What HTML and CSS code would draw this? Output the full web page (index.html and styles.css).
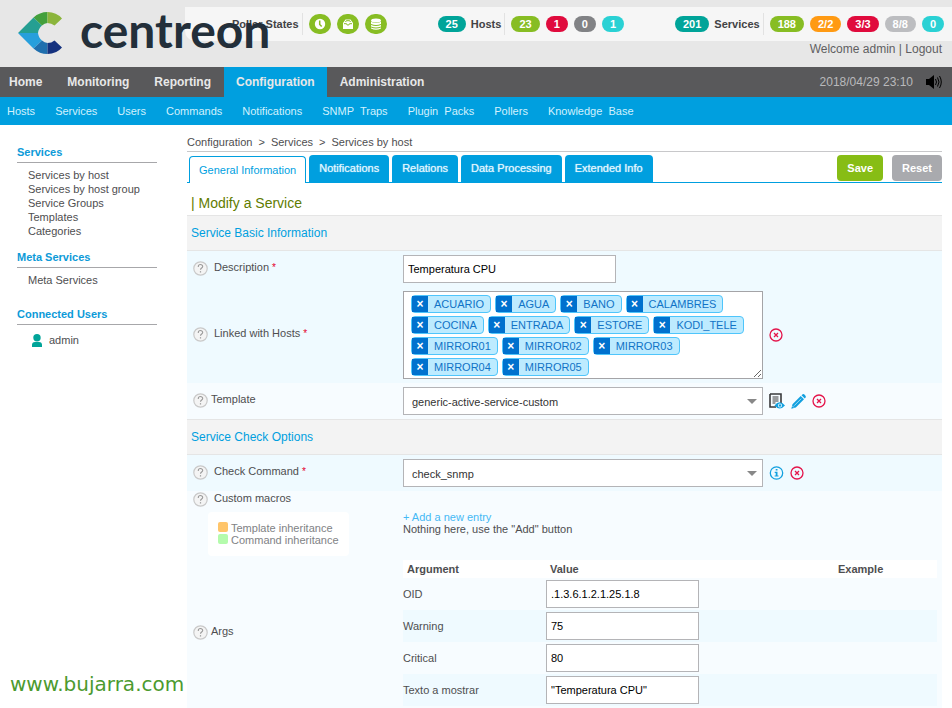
FILE: index.html
```html
<!DOCTYPE html>
<html lang="en">
<head>
    <meta charset="UTF-8">
    <meta name="viewport" content="width=device-width, initial-scale=1.0">
    <title>Centreon - Modify a Service</title>
    <link rel="stylesheet" href="styles.css">
</head>
<body>
    <!-- shared icons -->
    <svg class="sprite" aria-hidden="true">
        <symbol id="icon-help" viewBox="0 0 15 15">
            <circle cx="7.5" cy="7.5" r="6.7" fill="#f4f4f4" stroke="#c9c9c9" stroke-width="1.2"/>
            <path d="M5.3 6V5.5a2.2 2 0 0 1 4.4 0c0 1.6-2.2 1.5-2.2 3.3" fill="none" stroke="#999" stroke-width="1.1"/>
            <rect x="6.9" y="10.2" width="1.2" height="1.3" fill="#999"/>
        </symbol>
        <symbol id="icon-delete" viewBox="0 0 14 14">
            <circle cx="7" cy="7" r="6" fill="none" stroke="#e4154b" stroke-width="1.3"/>
            <path d="M5 5l4 4M9 5L5 9" stroke="#e4154b" stroke-width="1.3"/>
        </symbol>
    </svg>

    <header class="header">
        <a href="#" class="logo">
            <svg class="logo-mark" viewBox="0 0 44 42" aria-hidden="true">
                <path d="M0 21L15.500 5.500L24 13.500Q20.500 16.500 20 21z" fill="#259f92"/>
                <path d="M15.500 5.500Q21.500 0 29.500 0V11Q26.500 11.200 24 13.500z" fill="#43a03c"/>
                <path d="M29.500 0Q38.500 0 44 6.500L36.500 13.500Q33.500 11 29.500 11z" fill="#8bb53c"/>
                <path d="M0 21L15.500 36.500L24 28.500Q20.500 25.500 20 21z" fill="#279fdc"/>
                <path d="M15.500 36.500Q21.500 42 29.500 42V31Q26.500 30.800 24 28.500z" fill="#1f6fae"/>
                <path d="M29.500 42Q38.500 42 44 35.500L36.500 28.500Q33.500 31 29.500 31z" fill="#15327f"/>
            </svg>
            <span class="logo-text">centreon</span>
        </a>
        <div class="status-bar">
            <div class="status-group pollers">
                <span class="status-label">Poller States</span>
                <a href="#" class="poller" aria-label="Poller status">
                    <svg viewBox="0 0 22 20"><circle cx="11" cy="10" r="5.200" fill="#fff"/><path d="M10.700 6.500v4l2 2" fill="none" stroke="#87bd23" stroke-width="1.500"/></svg>
                </a>
                <a href="#" class="poller" aria-label="Poller latency">
                    <svg viewBox="0 0 22 20"><path d="M6 10.500V9l2.500-3.500h5L16 9v1.500V15H6z" fill="#fff"/><path d="M7 9.700h2.500l.7 1.300h1.600l.7-1.300H15M8.500 8l.8-1.300h3.400l.8 1.300" fill="none" stroke="#87bd23"/></svg>
                </a>
                <a href="#" class="poller" aria-label="Poller database">
                    <svg viewBox="0 0 22 20"><ellipse cx="11" cy="6.500" rx="5" ry="2" fill="#fff"/><path d="M6 7.700q5 2.600 10 0v2.200q-5 2.200-10 0zM6 10.900q5 2.200 10 0v1.600q-5 2.200-10 0zM6 13.500q5 2.200 10 0v1q-5 2.600-10 0z" fill="#fff"/></svg>
                </a>
            </div>
            <div class="status-group">
                <a href="#" class="badge total">25</a>
                <span class="status-label">Hosts</span>
                <a href="#" class="badge ok">23</a>
                <a href="#" class="badge critical">1</a>
                <a href="#" class="badge unreachable">0</a>
                <a href="#" class="badge pending">1</a>
            </div>
            <div class="status-group">
                <a href="#" class="badge total">201</a>
                <span class="status-label">Services</span>
                <a href="#" class="badge ok">188</a>
                <a href="#" class="badge warning">2/2</a>
                <a href="#" class="badge critical">3/3</a>
                <a href="#" class="badge unknown">8/8</a>
                <a href="#" class="badge pending">0</a>
            </div>
        </div>
        <div class="user-bar">Welcome <a href="#">admin</a> | <a href="#">Logout</a></div>
    </header>

    <nav class="nav">
        <a href="#">Home</a>
        <a href="#">Monitoring</a>
        <a href="#">Reporting</a>
        <a href="#" class="active">Configuration</a>
        <a href="#">Administration</a>
        <span class="clock">2018/04/29 23:10</span>
        <button type="button" class="icon-button sound" aria-label="Sound">
            <svg width="16" height="14" viewBox="0 0 16 14"><path d="M0 4h3l5-4v14L3 10H0z" fill="#000"/><path d="M9.500 4q2 3 0 6M11.500 2.500q3 4.500 0 9M13.500 1q3.600 6 0 12" fill="none" stroke="#000" stroke-width="1"/></svg>
        </button>
    </nav>
    <nav class="subnav">
        <a href="#">Hosts</a>
        <a href="#">Services</a>
        <a href="#">Users</a>
        <a href="#">Commands</a>
        <a href="#">Notifications</a>
        <a href="#">SNMP&nbsp; Traps</a>
        <a href="#">Plugin&nbsp; Packs</a>
        <a href="#">Pollers</a>
        <a href="#">Knowledge&nbsp; Base</a>
    </nav>

    <div class="page">
        <aside class="sidebar">
            <h3>Services</h3>
            <ul>
                <li><a href="#">Services by host</a></li>
                <li><a href="#">Services by host group</a></li>
                <li><a href="#">Service Groups</a></li>
                <li><a href="#">Templates</a></li>
                <li><a href="#">Categories</a></li>
            </ul>
            <h3>Meta Services</h3>
            <ul class="meta">
                <li><a href="#">Meta Services</a></li>
            </ul>
            <h3>Connected Users</h3>
            <div class="connected">
                <svg width="10" height="13" viewBox="0 0 10 13"><circle cx="5" cy="3.700" r="3.700" fill="#00a499"/><path d="M0 13v-2q0-3 3-3h4q3 0 3 3v2z" fill="#00a499"/></svg>
                <span>admin</span>
            </div>
        </aside>

        <main class="main">
            <div class="breadcrumb">
                <a href="#">Configuration</a><span>&gt;</span><a href="#">Services</a><span>&gt;</span><a href="#">Services by host</a>
            </div>

            <form class="service-form">
                <div class="toolbar">
                    <a href="#" class="tab active">General Information</a>
                    <a href="#" class="tab">Notifications</a>
                    <a href="#" class="tab">Relations</a>
                    <a href="#" class="tab">Data Processing</a>
                    <a href="#" class="tab">Extended Info</a>
                    <div class="actions">
                        <button type="submit" class="btn save">Save</button>
                        <button type="reset" class="btn reset">Reset</button>
                    </div>
                </div>

                <h1>| Modify a Service</h1>

                <h2>Service Basic Information</h2>
                <div class="row alt">
                    <div class="name wide">
                        <svg class="help"><use href="#icon-help"/></svg>
                        <label for="description">Description <em>*</em></label>
                    </div>
                    <input type="text" id="description" class="text-input description" value="Temperatura CPU">
                </div>
                <div class="row alt">
                    <div class="name wide">
                        <svg class="help"><use href="#icon-help"/></svg>
                        <span id="hosts-label">Linked with Hosts <em>*</em></span>
                    </div>
                    <div class="field">
                        <div class="tags" role="group" aria-labelledby="hosts-label">
                            <span class="tag"><button type="button" aria-label="Remove ACUARIO"></button>ACUARIO</span>
                            <span class="tag"><button type="button" aria-label="Remove AGUA"></button>AGUA</span>
                            <span class="tag"><button type="button" aria-label="Remove BANO"></button>BANO</span>
                            <span class="tag"><button type="button" aria-label="Remove CALAMBRES"></button>CALAMBRES</span>
                            <span class="tag"><button type="button" aria-label="Remove COCINA"></button>COCINA</span>
                            <span class="tag"><button type="button" aria-label="Remove ENTRADA"></button>ENTRADA</span>
                            <span class="tag"><button type="button" aria-label="Remove ESTORE"></button>ESTORE</span>
                            <span class="tag"><button type="button" aria-label="Remove KODI_TELE"></button>KODI_TELE</span>
                            <span class="tag"><button type="button" aria-label="Remove MIRROR01"></button>MIRROR01</span>
                            <span class="tag"><button type="button" aria-label="Remove MIRROR02"></button>MIRROR02</span>
                            <span class="tag"><button type="button" aria-label="Remove MIRROR03"></button>MIRROR03</span>
                            <span class="tag"><button type="button" aria-label="Remove MIRROR04"></button>MIRROR04</span>
                            <span class="tag"><button type="button" aria-label="Remove MIRROR05"></button>MIRROR05</span>
                        </div>
                        <button type="button" class="icon-button" aria-label="Clear hosts"><svg width="14" height="14"><use href="#icon-delete"/></svg></button>
                    </div>
                </div>
                <div class="row">
                    <div class="name">
                        <svg class="help"><use href="#icon-help"/></svg>
                        <label for="template">Template</label>
                    </div>
                    <div class="field">
                        <div class="select">
                            <select id="template">
                                <option>generic-active-service-custom</option>
                            </select>
                        </div>
                        <button type="button" class="icon-button" aria-label="View template">
                            <svg width="16" height="16" viewBox="0 0 16 16"><path d="M1 1h11v9M7 14H1V1" fill="none" stroke="#3a3a3c" stroke-width="1.600"/><path d="M3.500 4h6M3.500 6h6M3.500 8h6M3.500 10h3" stroke="#3a3a3c"/><path d="M5.500 12.500q5-6.500 10.500 0q-5.500 6-10.500 0z" fill="#12a0df"/><circle cx="11" cy="12.500" r="2" fill="#fff"/><circle cx="11" cy="12.500" r="1.200" fill="#12a0df"/></svg>
                        </button>
                        <button type="button" class="icon-button" aria-label="Edit template">
                            <svg width="15" height="15" viewBox="0 0 15 15"><path d="M.3 14.700l1.200-4.500L9.700 2l3.300 3.300-8.200 8.200zM10.500 1.200L11.700.200q1-.5 2.200.7t.9 2.400l-1 1.200z" fill="#12a0df"/><path d="M3.200 11.700l7-7" stroke="#bfe8fa" stroke-width=".8"/><path d="M1.600 12.200l1.200 1.200" stroke="#fff" stroke-width=".8"/></svg>
                        </button>
                        <button type="button" class="icon-button" aria-label="Clear template"><svg width="14" height="14"><use href="#icon-delete"/></svg></button>
                    </div>
                </div>

                <h2>Service Check Options</h2>
                <div class="row alt">
                    <div class="name wide">
                        <svg class="help"><use href="#icon-help"/></svg>
                        <label for="command">Check Command <em>*</em></label>
                    </div>
                    <div class="field">
                        <div class="select">
                            <select id="command">
                                <option>check_snmp</option>
                            </select>
                        </div>
                        <button type="button" class="icon-button" aria-label="Command info">
                            <svg width="15" height="14" viewBox="0 0 15 14"><circle cx="7.500" cy="7" r="6.200" fill="none" stroke="#12a0df" stroke-width="1.300"/><path d="M6.700 3h1.800v1.600H6.700zM5.700 5.700h2.800v3.700h1V10.600H5.600V9.400h1.100V6.900h-1z" fill="#12a0df"/></svg>
                        </button>
                        <button type="button" class="icon-button" aria-label="Clear command"><svg width="14" height="14"><use href="#icon-delete"/></svg></button>
                    </div>
                </div>
                <div class="row macros">
                    <div>
                        <div class="name wide">
                            <svg class="help"><use href="#icon-help"/></svg>
                            <span>Custom macros</span>
                        </div>
                        <ul class="legend">
                            <li><i class="swatch template"></i>Template inheritance</li>
                            <li><i class="swatch command"></i>Command inheritance</li>
                        </ul>
                    </div>
                    <div class="macro-list">
                        <a href="#">+ Add a new entry</a>
                        <p>Nothing here, use the "Add" button</p>
                    </div>
                </div>
                <div class="row args">
                    <div class="name">
                        <svg class="help"><use href="#icon-help"/></svg>
                        <span>Args</span>
                    </div>
                    <table class="args-table">
                        <thead>
                            <tr><th class="col-argument">Argument</th><th class="col-value">Value</th><th>Example</th></tr>
                        </thead>
                        <tbody>
                            <tr><td><label for="arg1">OID</label></td><td><input type="text" id="arg1" class="text-input" value=".1.3.6.1.2.1.25.1.8"></td><td></td></tr>
                            <tr><td><label for="arg2">Warning</label></td><td><input type="text" id="arg2" class="text-input" value="75"></td><td></td></tr>
                            <tr><td><label for="arg3">Critical</label></td><td><input type="text" id="arg3" class="text-input" value="80"></td><td></td></tr>
                            <tr><td><label for="arg4">Texto a mostrar</label></td><td><input type="text" id="arg4" class="text-input" value="&quot;Temperatura CPU&quot;"></td><td></td></tr>
                        </tbody>
                    </table>
                </div>
            </form>
        </main>
    </div>

    <div class="watermark">www.bujarra.com</div>
</body>
</html>
```

FILE: styles.css
```css
* {
    box-sizing: border-box;
}
body {
    margin: 0;
    position: relative;
    font-family: "Liberation Sans", Arial, sans-serif;
    font-size: 11px;
    line-height: 14px;
    color: #4e4e50;
    background-color: #fff;
}
a {
    color: inherit;
    text-decoration: none;
}
ul, p, h1, h2, h3 {
    margin: 0;
    padding: 0;
    list-style: none;
}
button, input, select {
    font-family: inherit;
    font-size: 11px;
}
svg {
    display: block;
}
.sprite {
    position: absolute;
    width: 0;
    height: 0;
}

/* header */
.header {
    position: relative;
    height: 67px;
    padding-top: 7px;
    background-color: #e7e7e7;
}
.logo {
    position: absolute;
    z-index: 1;
    top: 0;
    left: 18px;
    display: flex;
    gap: 18px;
    padding-top: 12px;
}
.logo-mark {
    width: 44px;
    height: 42px;
}
.logo-text {
    font-family: Lato, sans-serif;
    font-size: 48px;
    font-weight: bold;
    line-height: 36px;
    color: #232f3a;
}
.status-bar {
    display: flex;
    justify-content: flex-end;
    align-items: center;
    gap: 51px;
    height: 34px;
    margin-left: 185px;
    padding-right: 8px;
    background-color: #f6f6f6;
    border-bottom-left-radius: 10px;
}
.status-group {
    display: flex;
    align-items: center;
    gap: 6px;
}
.status-label {
    margin-left: -1px;
    padding-right: 3px;
    border-right: 1px solid #e2e2e2;
    font-weight: bold;
    line-height: 22px;
    color: #424244;
}
.poller {
    width: 22px;
    height: 20px;
    border-radius: 10px;
    background-color: #87bd23;
}
.badge {
    padding: 0 8px;
    border-radius: 8px;
    font-weight: bold;
    line-height: 16px;
    color: #fff;
}
.total {
    background-color: #00a499;
}
.ok {
    background-color: #87bd23;
}
.critical {
    background-color: #e00b3d;
}
.warning {
    background-color: #ff9a13;
}
.unreachable {
    background-color: #818285;
}
.unknown {
    background-color: #bcbdc0;
}
.pending {
    background-color: #2ad1d4;
}
.user-bar {
    padding-right: 10px;
    font-size: 12px;
    line-height: 16px;
    text-align: right;
    color: #5f5f62;
}

/* navigation */
.nav {
    display: flex;
    align-items: center;
    gap: 1px;
    padding-right: 10px;
    background-color: #59595b;
    font-size: 12px;
    line-height: 30px;
    color: #e8e8e8;
}
.nav a {
    padding: 0 12px;
    font-weight: bold;
}
.nav a:first-child {
    padding-left: 9px;
}
.nav .active {
    background-color: #009fdf;
}
.clock {
    margin-left: auto;
    margin-right: 12px;
    color: #b9b9bb;
}
.icon-button {
    padding: 0;
    border: none;
    background: none;
    cursor: pointer;
}
.subnav {
    display: flex;
    gap: 20px;
    padding-left: 7px;
    background-color: #009fdf;
    line-height: 28px;
    color: #d2f1fd;
}

/* page */
.page {
    display: flex;
}
.sidebar {
    flex: none;
    width: 187px;
    padding: 20px 30px 0 17px;
}
.sidebar h3 {
    padding-bottom: 3px;
    border-bottom: 1px solid #a7a7aa;
    font-size: 11px;
    color: #0c9ad8;
}
.sidebar ul {
    padding: 5px 0 12px 11px;
}
.sidebar .meta {
    padding-bottom: 20px;
}
.connected {
    display: flex;
    align-items: center;
    gap: 7px;
    padding: 8px 15px;
}
.main {
    flex: 1;
    min-width: 0;
    padding: 9px 10px 0 0;
}
.breadcrumb {
    padding: 1px 0 2px;
    border-bottom: 1px solid #c8c8ca;
}
.breadcrumb span {
    padding: 0 6px;
}

/* tabs and buttons */
.toolbar {
    display: flex;
    align-items: flex-start;
    gap: 3px;
    padding: 3px 0 0 2px;
    border-bottom: 1px solid #009fdf;
}
.tab {
    padding: 0 10px;
    border-radius: 4px 4px 0 0;
    background-color: #009fdf;
    line-height: 27px;
    color: #e2f6fe;
    text-shadow: 0 0 1px #c5ecfb;
}
.tab.active {
    margin: 1px 0 -1px;
    padding: 0 9px;
    border: 1px solid #009fdf;
    border-bottom: none;
    background-color: #fff;
    line-height: 26px;
    color: #009fdf;
    text-shadow: none;
}
.actions {
    display: flex;
    gap: 9px;
    margin-left: auto;
}
.btn {
    padding: 0 10px;
    border: none;
    border-radius: 4px;
    font-weight: bold;
    line-height: 26px;
    color: #fff;
    cursor: pointer;
}
.save {
    background-color: #87bd15;
}
.reset {
    background-color: #a9aaae;
}

/* form */
h1 {
    padding: 12px 4px 4px;
    font-size: 14px;
    font-weight: normal;
    line-height: 16px;
    color: #5f7c00;
}
h2 {
    padding-left: 4px;
    border: 1px solid #e5e5e5;
    border-width: 1px 0;
    background-color: #f3f3f3;
    font-size: 12px;
    font-weight: normal;
    line-height: 34px;
    color: #009fdf;
}
.row {
    display: grid;
    grid-template-columns: 216px 1fr;
    align-items: center;
    padding: 4px 0;
    background-color: #f7fcff;
}
.row.alt {
    background-color: #effaff;
}
.name {
    display: flex;
    gap: 3px;
    padding: 0 0 3px 6px;
}
.name.wide {
    gap: 6px;
}
.name em {
    font-size: 10px;
    font-style: normal;
    color: #e4002b;
}
.help {
    width: 15px;
    height: 15px;
    margin-top: 1px;
}
.text-input {
    width: 153px;
    height: 28px;
    padding: 0 4px;
    border: 1px solid #b4b4b7;
    background-color: #fff;
    color: #000;
}
.description {
    width: 213px;
}
.field {
    display: flex;
    align-items: center;
    gap: 6px;
}
.select, .tags {
    width: 360px;
}
.select {
    position: relative;
}
.select::after {
    content: "";
    position: absolute;
    top: 12px;
    right: 6px;
    border: 5px solid transparent;
    border-top-color: #888;
    border-bottom: none;
    pointer-events: none;
}
.select select {
    display: block;
    width: 100%;
    height: 28px;
    padding: 2px 8px 0;
    appearance: none;
    border: 1px solid #b4b4b7;
    border-radius: 0;
    background-color: #fff;
    color: #333;
}
.tags {
    display: flex;
    flex-wrap: wrap;
    gap: 3px 4px;
    padding: 3px 7px 2px;
    border: 1px solid #a4a4a7;
    background-color: #fff;
    resize: vertical;
    overflow: hidden;
}
.tag {
    display: flex;
    gap: 6px;
    padding-right: 6px;
    border: 1px solid #4fc5fb;
    border-radius: 4px;
    background-color: #bdebff;
    line-height: 16px;
    color: #1173c6;
}
.tag button {
    width: 16px;
    padding: 0;
    border: none;
    background-color: #0071ce;
    font-size: 12px;
    font-weight: bold;
    line-height: 16px;
    color: #fff;
    cursor: pointer;
}
.tag button::before {
    content: "×";
}

/* macros and arguments */
.macros {
    align-items: start;
    padding: 0;
}
.legend {
    width: 141px;
    margin: 2px 0 0 21px;
    padding: 10px;
    border-radius: 4px;
    background-color: #fff;
    line-height: 12px;
    color: #818285;
}
.legend li {
    display: flex;
    gap: 3px;
}
.swatch {
    width: 10px;
    height: 10px;
    border-radius: 2px;
}
.swatch.template {
    background-color: #ffc56a;
}
.swatch.command {
    background-color: #b4fbac;
}
.macro-list {
    padding-top: 20px;
    line-height: 12px;
}
.macro-list a {
    color: #45b9f5;
}
.args {
    padding-bottom: 2px;
}
.args-table {
    width: calc(100% - 5px);
    table-layout: fixed;
    border-collapse: collapse;
}
.args-table th {
    padding: 2px 4px;
    background-color: #fff;
    text-align: left;
}
.args-table .col-argument {
    width: 143px;
}
.args-table .col-value {
    width: 288px;
}
.args-table td {
    padding: 2px 0;
}
.args-table tbody tr:nth-child(even) {
    background-color: #effaff;
}
.args-table .text-input {
    display: block;
}

.watermark {
    position: absolute;
    left: 10px;
    bottom: 12px;
    font-family: "DejaVu Sans", sans-serif;
    font-size: 20px;
    line-height: 24px;
    color: #4c9a2f;
}
```
